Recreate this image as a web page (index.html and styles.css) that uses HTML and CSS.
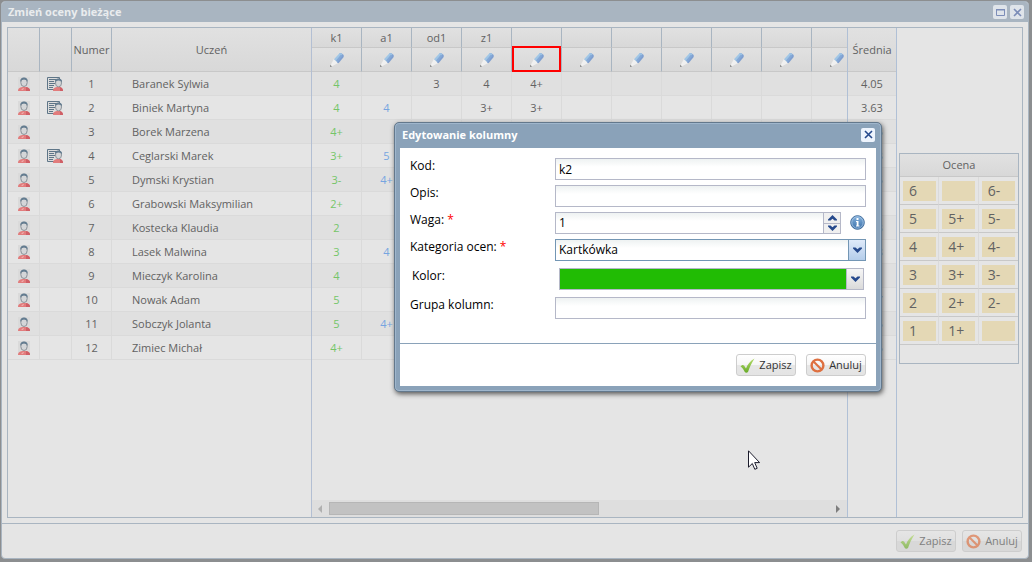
FILE: index.html
```html
<!DOCTYPE html>
<html lang="pl">
<head>
<meta charset="utf-8">
<title>Zmień oceny bieżące</title>
<link rel="stylesheet" href="styles.css">
</head>
<body>
<svg class="sprite" aria-hidden="true">
  <symbol id="user" viewBox="0 0 12 14">
    <path d="M0 0h12v14H0z" fill="#dadada"/>
    <path d="M0 14c0-3 2-4 6-4s6 1 6 4z" fill="#e27c7c"/>
    <path d="M8 10c3 .500 4 2 4 4H8z" fill="#cf5f66"/>
    <path d="M3 13l2-2h1l-1 2z" fill="#f0aaaa"/>
    <ellipse cx="6" cy="5.500" rx="3.200" ry="4" fill="#d4d6d8" stroke="#8b9299"/>
    <path d="M2.300 5C2 1.500 4 .500 6 .500S10 1.500 9.700 5L8.500 3.200 6 2.600 3.500 3.200z" fill="#637c90"/>
  </symbol>
  <symbol id="note" viewBox="0 0 17 14">
    <path d="M.5.500h12v12H.5z" fill="#dcdcdc" stroke="#5f7688"/>
    <path d="M2 2.500h7M2 4.500h5M2 6.500h6M2 8.500h5M2 10.500h4" stroke="#5f7688"/>
    <path d="M6 14c0-3 2-4 5-4s5 1 5 4z" fill="#e27c7c"/>
    <path d="M13 10c2 .500 3 2 3 4h-3z" fill="#cf5f66"/>
    <ellipse cx="11.500" cy="6" rx="3" ry="3.800" fill="#d4d6d8" stroke="#8b9299"/>
    <path d="M8 5.500C7.500 2.500 9.500 1.500 11.500 1.500s4 1 3.500 4l-1.200-1.500-2.300-.5-2.300.5z" fill="#637c90"/>
  </symbol>
  <symbol id="pencil" viewBox="0 0 14 14">
    <path d="M3.800 6L8 10 1.500 13.500.5 12.500z" fill="#f0f0f0"/>
    <path d="M9.500.300h2L13.700 2v2L8.500 10.300 7 9.500z" fill="#7f9fd0"/>
    <path d="M9.500.300h2l1 1.200L7 9 4 6.200z" fill="#a0c6e6"/>
    <path d="M11 1.500l1.500 1.300L7.500 9 6 7.600z" fill="#84a9d8"/>
    <path d="M0 14v-2.200L2.200 13.500z" fill="#8a8a8a"/>
  </symbol>
  <symbol id="check" viewBox="0 0 15 15">
    <path d="M.5 8.500C1.500 7 3 6.500 4 7.500l2 3C7.500 6.500 10 3 14.500.500 11.500 5 9.500 9.500 8 14c-1 1-2.500 1-3.200 0C3.500 11.500 2.500 9.500.5 8.500z" fill="url(#leaf)"/>
  </symbol>
  <symbol id="ban" viewBox="0 0 15 15">
    <circle cx="7.500" cy="7.500" r="5.900" fill="none" stroke="#de7040" stroke-width="2.400"/>
    <path d="M3.500 3.500l8 8" stroke="#de7040" stroke-width="2.200"/>
  </symbol>
  <symbol id="down" viewBox="0 0 9 6">
    <path d="M0 .500h2.500l2 1.800 2-1.800H9v1L4.500 6 0 1.500z" fill="#26498c"/>
  </symbol>
  <symbol id="up" viewBox="0 0 9 6">
    <path d="M0 5.500h2.500l2-1.800 2 1.800H9v-1L4.500 0 0 4.500z" fill="#26498c"/>
  </symbol>
  <symbol id="cross" viewBox="0 0 9 9">
    <path d="M1 1l7 7M8 1L1 8" stroke="currentColor" stroke-width="1.600"/>
  </symbol>
  <symbol id="max" viewBox="0 0 9 9">
    <path d="M.5 1.500h8v6h-8z" fill="none" stroke="currentColor"/>
    <path d="M0 1h9v1.500H0z" fill="currentColor"/>
  </symbol>
  <defs>
    <linearGradient id="leaf" x2="0" y2="1"><stop stop-color="#b5dc6c"/><stop offset="1" stop-color="#68ab28"/></linearGradient>
    <linearGradient id="infofill" x2="0" y2="1"><stop stop-color="#86b3de"/><stop offset="1" stop-color="#386ea8"/></linearGradient>
  </defs>
</svg>

<main class="window">
  <header class="window-head">
    <h1>Zmień oceny bieżące</h1>
    <button class="tool" type="button" aria-label="Maksymalizuj"><svg class="i9"><use href="#max"/></svg></button>
    <button class="tool" type="button" aria-label="Zamknij"><svg class="i9"><use href="#cross"/></svg></button>
  </header>

  <div class="panel">
    <section class="pupils">
      <table class="grid">
        <colgroup><col class="c-icon"><col class="c-icon"><col class="c-num"><col></colgroup>
        <thead><tr class="tall"><th></th><th></th><th>Numer</th><th>Uczeń</th></tr></thead>
        <tbody>
          <tr><td><svg class="user"><use href="#user"/></svg></td><td><svg class="note"><use href="#note"/></svg></td><td>1</td><td class="name">Baranek Sylwia</td></tr>
          <tr><td><svg class="user"><use href="#user"/></svg></td><td><svg class="note"><use href="#note"/></svg></td><td>2</td><td class="name">Biniek Martyna</td></tr>
          <tr><td><svg class="user"><use href="#user"/></svg></td><td></td><td>3</td><td class="name">Borek Marzena</td></tr>
          <tr><td><svg class="user"><use href="#user"/></svg></td><td><svg class="note"><use href="#note"/></svg></td><td>4</td><td class="name">Ceglarski Marek</td></tr>
          <tr><td><svg class="user"><use href="#user"/></svg></td><td></td><td>5</td><td class="name">Dymski Krystian</td></tr>
          <tr><td><svg class="user"><use href="#user"/></svg></td><td></td><td>6</td><td class="name">Grabowski Maksymilian</td></tr>
          <tr><td><svg class="user"><use href="#user"/></svg></td><td></td><td>7</td><td class="name">Kostecka Klaudia</td></tr>
          <tr><td><svg class="user"><use href="#user"/></svg></td><td></td><td>8</td><td class="name">Lasek Malwina</td></tr>
          <tr><td><svg class="user"><use href="#user"/></svg></td><td></td><td>9</td><td class="name">Mieczyk Karolina</td></tr>
          <tr><td><svg class="user"><use href="#user"/></svg></td><td></td><td>10</td><td class="name">Nowak Adam</td></tr>
          <tr><td><svg class="user"><use href="#user"/></svg></td><td></td><td>11</td><td class="name">Sobczyk Jolanta</td></tr>
          <tr><td><svg class="user"><use href="#user"/></svg></td><td></td><td>12</td><td class="name">Zimiec Michał</td></tr>
        </tbody>
      </table>
    </section>

    <section class="marks">
      <div class="marks-view">
      <table class="grid marks-grid">
        <thead>
          <tr class="codes"><th>k1</th><th>a1</th><th>od1</th><th>z1</th><th></th><th></th><th></th><th></th><th></th><th></th><th></th></tr>
          <tr class="edits">
            <th><svg class="pencil"><use href="#pencil"/></svg></th><th><svg class="pencil"><use href="#pencil"/></svg></th><th><svg class="pencil"><use href="#pencil"/></svg></th><th><svg class="pencil"><use href="#pencil"/></svg></th><th class="picked"><svg class="pencil"><use href="#pencil"/></svg></th><th><svg class="pencil"><use href="#pencil"/></svg></th><th><svg class="pencil"><use href="#pencil"/></svg></th><th><svg class="pencil"><use href="#pencil"/></svg></th><th><svg class="pencil"><use href="#pencil"/></svg></th><th><svg class="pencil"><use href="#pencil"/></svg></th><th><svg class="pencil"><use href="#pencil"/></svg></th>
          </tr>
        </thead>
        <tbody>
          <tr><td>4</td><td></td><td>3</td><td>4</td><td>4+</td><td></td><td></td><td></td><td></td><td></td><td></td></tr>
          <tr><td>4</td><td>4</td><td></td><td>3+</td><td>3+</td><td></td><td></td><td></td><td></td><td></td><td></td></tr>
          <tr><td>4+</td><td></td><td></td><td></td><td></td><td></td><td></td><td></td><td></td><td></td><td></td></tr>
          <tr><td>3+</td><td>5</td><td></td><td></td><td></td><td></td><td></td><td></td><td></td><td></td><td></td></tr>
          <tr><td>3-</td><td>4+</td><td></td><td></td><td></td><td></td><td></td><td></td><td></td><td></td><td></td></tr>
          <tr><td>2+</td><td></td><td></td><td></td><td></td><td></td><td></td><td></td><td></td><td></td><td></td></tr>
          <tr><td>2</td><td></td><td></td><td></td><td></td><td></td><td></td><td></td><td></td><td></td><td></td></tr>
          <tr><td>3</td><td>4</td><td></td><td></td><td></td><td></td><td></td><td></td><td></td><td></td><td></td></tr>
          <tr><td>4</td><td></td><td></td><td></td><td></td><td></td><td></td><td></td><td></td><td></td><td></td></tr>
          <tr><td>5</td><td></td><td></td><td></td><td></td><td></td><td></td><td></td><td></td><td></td><td></td></tr>
          <tr><td>5</td><td>4+</td><td></td><td></td><td></td><td></td><td></td><td></td><td></td><td></td><td></td></tr>
          <tr><td>4+</td><td></td><td></td><td></td><td></td><td></td><td></td><td></td><td></td><td></td><td></td></tr>
        </tbody>
      </table>
      </div>
      <div class="scroll">
        <svg class="arrow" viewBox="0 0 4 8"><path d="M4 0v8L0 4z" fill="#b0b0b0"/></svg>
        <div class="track"><div class="thumb"></div></div>
        <svg class="arrow" viewBox="0 0 4 8"><path d="M0 0v8l4-4z" fill="#7d7d7d"/></svg>
      </div>
    </section>

    <section class="average">
      <table class="grid">
        <thead><tr class="tall"><th>Średnia</th></tr></thead>
        <tbody>
          <tr><td>4.05</td></tr><tr><td>3.63</td></tr><tr><td>4.25</td></tr><tr><td>3.63</td></tr><tr><td>3.75</td></tr><tr><td></td></tr><tr><td>2.63</td></tr><tr><td>3.38</td></tr><tr><td></td></tr><tr><td>4.67</td></tr><tr><td>4.75</td></tr><tr><td>4.25</td></tr>
        </tbody>
      </table>
    </section>

    <aside class="side">
      <table class="picker">
        <thead><tr><th colspan="3">Ocena</th></tr></thead>
        <tbody>
          <tr><td><button type="button">6</button></td><td><button type="button" aria-label="Pusta"></button></td><td><button type="button">6-</button></td></tr>
          <tr><td><button type="button">5</button></td><td><button type="button">5+</button></td><td><button type="button">5-</button></td></tr>
          <tr><td><button type="button">4</button></td><td><button type="button">4+</button></td><td><button type="button">4-</button></td></tr>
          <tr><td><button type="button">3</button></td><td><button type="button">3+</button></td><td><button type="button">3-</button></td></tr>
          <tr><td><button type="button">2</button></td><td><button type="button">2+</button></td><td><button type="button">2-</button></td></tr>
          <tr><td><button type="button">1</button></td><td><button type="button">1+</button></td><td><button type="button" aria-label="Brak"></button></td></tr>
        </tbody>
        <tfoot><tr><td colspan="3"></td></tr></tfoot>
      </table>
    </aside>
  </div>

  <footer class="window-foot">
    <button class="btn" type="button"><svg class="i15"><use href="#check"/></svg>Zapisz</button>
    <button class="btn" type="button"><svg class="i15"><use href="#ban"/></svg>Anuluj</button>
  </footer>
</main>

<form class="dialog" role="dialog" aria-labelledby="dialog-title">
  <header class="dialog-head">
    <h2 id="dialog-title">Edytowanie kolumny</h2>
    <button class="tool" type="button" aria-label="Zamknij"><svg class="i9"><use href="#cross"/></svg></button>
  </header>
  <div class="fields">
    <div class="row"><label for="kod">Kod:</label><input class="box" id="kod" type="text" value="k2"></div>
    <div class="row"><label for="opis">Opis:</label><input class="box" id="opis" type="text"></div>
    <div class="row"><label for="waga">Waga: <span class="req">*</span></label>
      <div class="combo"><input id="waga" type="text" inputmode="numeric" value="1">
        <span class="spin"><button type="button" aria-label="Więcej"><svg class="chev"><use href="#up"/></svg></button><button type="button" aria-label="Mniej"><svg class="chev"><use href="#down"/></svg></button></span></div>
      <svg class="info" viewBox="0 0 15 15"><circle cx="7.500" cy="7.500" r="6.800" fill="url(#infofill)" stroke="#3f6c9c"/><circle cx="7.500" cy="7.500" r="5.700" fill="none" stroke="#a9c8e6" stroke-width=".8"/><path d="M6.500 3h2v2h-2zM6 6h2.500v4.500H9.500v1H6v-1h.7V7H6z" fill="#fff"/></svg>
    </div>
    <div class="row"><label for="kat">Kategoria ocen: <span class="req">*</span></label>
      <div class="combo active"><select id="kat"><option>Kartkówka</option></select><span class="trigger"><svg class="chev"><use href="#down"/></svg></span></div>
    </div>
    <div class="row color-row"><label for="kolor">Kolor:</label>
      <button class="combo" id="kolor" type="button"><span class="swatch"></span><span class="trigger"><svg class="chev"><use href="#down"/></svg></span></button>
    </div>
    <div class="row"><label for="grupa">Grupa kolumn:</label><input class="box" id="grupa" type="text"></div>
  </div>
  <footer class="dialog-foot">
    <button class="btn" type="button"><svg class="i15"><use href="#check"/></svg>Zapisz</button>
    <button class="btn" type="button"><svg class="i15"><use href="#ban"/></svg>Anuluj</button>
  </footer>
</form>

<svg class="cursor" viewBox="0 0 12 20" aria-hidden="true"><path d="M.5.800v16.400l3.800-3.700 2.500 5.800 2.400-1-2.500-5.700h4.900z" fill="#fff" stroke="#1b1b2b"/></svg>
</body>
</html>
```

FILE: styles.css
```css
* { box-sizing: border-box; }

body {
  margin: 0;
  height: 100vh;
  padding: 1px 3px 3px 1px;
  display: flex;
  background: #8c8e90;
  color: #626262;
  font: 11px/16px "Open Sans", "Noto Sans", sans-serif;
  overflow: hidden;
}

h1, h2 { margin: 0; flex: 1; font-size: 11px; line-height: 16px; font-weight: 700; }
button, input, select { font: inherit; color: inherit; margin: 0; padding: 0; border: 0; background: none; }
table { border-collapse: separate; border-spacing: 0; table-layout: fixed; width: 100%; }
svg { display: block; flex: none; }
.sprite { position: absolute; width: 0; height: 0; }

.i9 { width: 9px; height: 9px; }
.i15 { width: 15px; height: 15px; }
.user { width: 12px; height: 14px; margin: 0 auto; }
.note { width: 17px; height: 14px; margin: 0 auto; }
.pencil { width: 14px; height: 14px; margin: 0 auto; }
.chev { width: 9px; height: 6px; }

/* Main window */
.window {
  flex: 1;
  min-width: 0;
  display: flex;
  flex-direction: column;
  border: 1px solid #a9b5c1;
  border-radius: 4px;
  background: #e5e5e5;
  overflow: hidden;
}
.window-head {
  height: 20px;
  display: flex;
  align-items: center;
  gap: 3px;
  padding: 0 4px 0 6px;
  background: #a9b5c1;
  color: #e9ecee;
}
.tool {
  width: 14px;
  height: 14px;
  display: grid;
  place-items: center;
  border-radius: 2px;
  background: #dfe4ea;
  color: #7c8db8;
}

.panel {
  flex: 1;
  min-height: 0;
  display: flex;
  margin: 5px;
  border: 1px solid #a9b5c1;
}
.pupils { width: 304px; border-right: 1px solid #b3bfd3; }
.marks { flex: 1; min-width: 0; display: flex; flex-direction: column; }
.marks-view { flex: 1; overflow: hidden; }
.marks-grid { width: 550px; }
.average { width: 50px; border: 1px solid #b0c0d6; border-width: 0 1px; }
.side { width: 125px; padding: 125px 3px 0 2px; }

.c-icon { width: 32px; }
.c-num { width: 40px; }
.grid th, .grid td { padding: 0; font-weight: 400; text-align: center; border: solid #dadada; border-width: 0 1px 1px 0; }
.grid th { border-color: #a9b5c1; border-bottom-color: #c8c8c8; background: linear-gradient(#e1e1e1, #d8d8d8); }
.grid tr > :last-child { border-right-width: 0; }
.marks-grid tr > :last-child { border-right-width: 1px; }
.grid .tall th { height: 44px; }
.grid .codes th { height: 20px; }
.grid .edits th { height: 24px; }
.grid td { height: 24px; }
.grid tbody tr:nth-child(odd) { background: #e0e0e0; }
.grid .name { padding-left: 20px; text-align: left; }
.marks-grid td:nth-child(1) { color: #74c568; }
.marks-grid td:nth-child(2) { color: #76a5e0; }

.picked { position: relative; }
.picked::after { content: ""; position: absolute; inset: -2px 0 -1px; border: 2px solid #f00; }

.scroll { height: 17px; display: flex; align-items: center; padding: 0 7px 0 6px; background: #dedede; }
.arrow { width: 4px; height: 8px; }
.track { flex: 1; padding: 0 7px; }
.thumb { width: 54%; height: 13px; background: #c2c2c2; border: 1px solid #b6b6b6; }

.picker { border: 1px solid #a9b5c1; }
.picker th { height: 23px; padding: 0; font-weight: 400; border-bottom: 1px solid #c8c8c8; background: linear-gradient(#e1e1e1, #d8d8d8); }
.picker td { height: 28px; padding: 0 3px; border: solid #dadada; border-width: 0 1px 1px 0; border-bottom-color: #c8c8c8; }
.picker td:last-child { border-right: 0; }
.picker tfoot td { height: 18px; border-bottom: 0; }
.picker button { display: block; width: 33px; height: 20px; padding-left: 6px; text-align: left; font-size: 14px; line-height: 20px; background: #e4d8b5; }

.window-foot {
  height: 35px;
  display: flex;
  justify-content: flex-end;
  align-items: center;
  gap: 6px;
  padding: 0 6px;
  border-top: 1px solid #a9b5c1;
}
.btn {
  height: 22px;
  width: 60px;
  display: flex;
  align-items: center;
  justify-content: center;
  gap: 4px;
  border: 1px solid #cdcdcd;
  border-radius: 3px;
  background: linear-gradient(#fff, #f6f6f6 48%, #e6e6e6 52%, #e4e4e4);
  color: #333;
}
.window-foot .btn { background: linear-gradient(#e5e5e5, #e0e0e0 48%, #d8d8d8 52%, #d8d8d8); color: #808080; }
.window-foot .i15 { opacity: .65; }

/* Column editor */
.dialog {
  position: absolute;
  left: 394px;
  top: 122px;
  width: 488px;
  padding: 0 5px 5px;
  border: 1px solid #63788c;
  border-radius: 5px;
  background: #8aa2b9;
  box-shadow: inset 0 0 0 1px #9fb6cc, 1px 2px 5px #555;
  color: #000;
  font-size: 12px;
}
.dialog-head { height: 25px; display: flex; align-items: center; padding: 0 1px 2px 2px; color: #fff; }
.dialog-head .tool { background: #eef4fd; color: #26498c; }
.fields { display: flex; flex-direction: column; gap: 5px; padding: 10px 10px 24px; background: #fff; }
.row { display: flex; align-items: flex-start; height: 22px; }
.row label { width: 145px; }
.color-row { margin: 2px 2px; }
.color-row label { width: 147px; }
.req { color: #f00; }
.box, .combo { flex: 1; min-width: 0; height: 22px; border: 1px solid #b5b8c8; background: linear-gradient(#eef2f2, #fff 8px); }
.box, .combo input, .combo select { padding: 0 3px; }
.combo { display: flex; }
.combo input, .combo select { flex: 1; min-width: 0; appearance: none; outline: 0; }
.combo.active { border-color: #7396b4; }
.trigger { width: 17px; display: grid; place-items: center; border-left: 1px solid #b5b8c8; background: linear-gradient(#f6f6f6, #dadada); }
.active .trigger { background: linear-gradient(#dfeafa, #b4cdea); border-color: #7396b4; }
.swatch { flex: 1; background: #21bc04; }
.spin { width: 17px; display: flex; flex-direction: column; border-left: 1px solid #b5b8c8; }
.spin button { flex: 1; display: grid; place-items: center; background: #f0f0f0; }
.spin button + button { border-top: 1px solid #b5b8c8; }
.info { width: 15px; height: 15px; margin: 3px 1px 0 9px; }
.dialog-foot {
  height: 43px;
  display: flex;
  justify-content: flex-end;
  align-items: center;
  gap: 10px;
  padding: 0 10px;
  border-top: 1px solid #8aa2b9;
  background: #fff;
  font-size: 11px;
}

.cursor { position: absolute; left: 748px; top: 450px; width: 12px; height: 20px; }
```
